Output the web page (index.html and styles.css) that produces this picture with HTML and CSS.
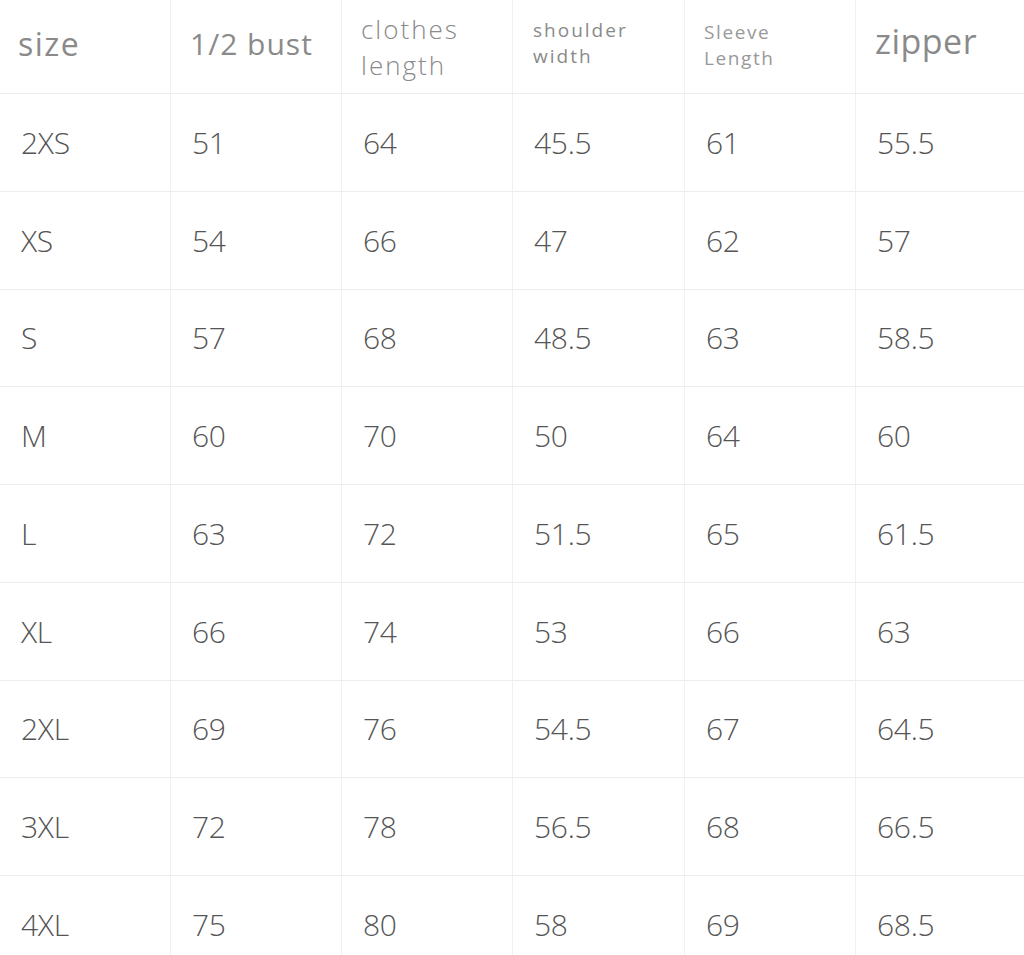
FILE: index.html
```html
<!DOCTYPE html>
<html>
<head>
<meta charset="utf-8">
<link rel="stylesheet" href="styles.css">
</head>
<body>
<div class="table">
  <div class="cell head h-size">size</div>
  <div class="cell head h-bust">1/2 bust</div>
  <div class="cell head h-clothes"><span class="line">clothes</span><span class="line">length</span></div>
  <div class="cell head h-shoulder"><span class="line">shoulder</span><span class="line">width</span></div>
  <div class="cell head h-sleeve"><span class="line">Sleeve</span><span class="line">Length</span></div>
  <div class="cell head h-zipper">zipper</div>

  <div class="cell">2XS</div><div class="cell">51</div><div class="cell">64</div><div class="cell">45.5</div><div class="cell">61</div><div class="cell">55.5</div>
  <div class="cell">XS</div><div class="cell">54</div><div class="cell">66</div><div class="cell">47</div><div class="cell">62</div><div class="cell">57</div>
  <div class="cell">S</div><div class="cell">57</div><div class="cell">68</div><div class="cell">48.5</div><div class="cell">63</div><div class="cell">58.5</div>
  <div class="cell">M</div><div class="cell">60</div><div class="cell">70</div><div class="cell">50</div><div class="cell">64</div><div class="cell">60</div>
  <div class="cell">L</div><div class="cell">63</div><div class="cell">72</div><div class="cell">51.5</div><div class="cell">65</div><div class="cell">61.5</div>
  <div class="cell">XL</div><div class="cell">66</div><div class="cell">74</div><div class="cell">53</div><div class="cell">66</div><div class="cell">63</div>
  <div class="cell">2XL</div><div class="cell">69</div><div class="cell">76</div><div class="cell">54.5</div><div class="cell">67</div><div class="cell">64.5</div>
  <div class="cell">3XL</div><div class="cell">72</div><div class="cell">78</div><div class="cell">56.5</div><div class="cell">68</div><div class="cell">66.5</div>
  <div class="cell">4XL</div><div class="cell">75</div><div class="cell">80</div><div class="cell">58</div><div class="cell">69</div><div class="cell">68.5</div>
</div>
</body>
</html>
```
FILE: styles.css
```css
html, body {
  margin: 0;
  padding: 0;
  background: #ffffff;
}
body {
  width: 1024px;
  height: 955px;
  overflow: hidden;
}
.table {
  display: grid;
  grid-template-columns: 171px 171px 171px 172px 171px 1fr;
  grid-template-rows: 94px repeat(9, 97.75px);
  width: 1024px;
}
.cell {
  box-sizing: border-box;
  display: flex;
  align-items: center;
  padding-left: 21px;
  border-right: 1.5px solid #f0f0f4;
  border-bottom: 1.5px solid #ececf1;
  font-family: "Open Sans", "Noto Sans", sans-serif;
  font-weight: 300;
  font-size: 30px;
  color: #555555;
  letter-spacing: -0.3px;
}
.cell:nth-child(6n) {
  border-right: none;
}
.head {
  color: #8a8a8a;
  font-weight: 400;
  line-height: 1.05;
  letter-spacing: 0;
  padding-left: 18px;
  padding-bottom: 6px;
}
.h-clothes, .h-shoulder, .h-sleeve {
  flex-direction: column;
  align-items: flex-start;
  justify-content: center;
}
.line {
  display: block;
}
.h-size { font-size: 32px; letter-spacing: 1.5px; }
.h-bust { font-size: 30px; letter-spacing: 1px; padding-left: 19px; }
.h-clothes { font-size: 26px; line-height: 36px; letter-spacing: 2px; padding-left: 19px; padding-bottom: 0; font-weight: 300; }
.h-shoulder { font-size: 19px; letter-spacing: 2px; padding-left: 20px; padding-bottom: 8px; line-height: 26px; }
.h-sleeve { font-size: 19px; letter-spacing: 1.6px; padding-left: 19px; padding-bottom: 4px; line-height: 26px; color: #999; }
.h-zipper { font-size: 34px; letter-spacing: 0.5px; padding-left: 19px; padding-bottom: 10px; }
```
